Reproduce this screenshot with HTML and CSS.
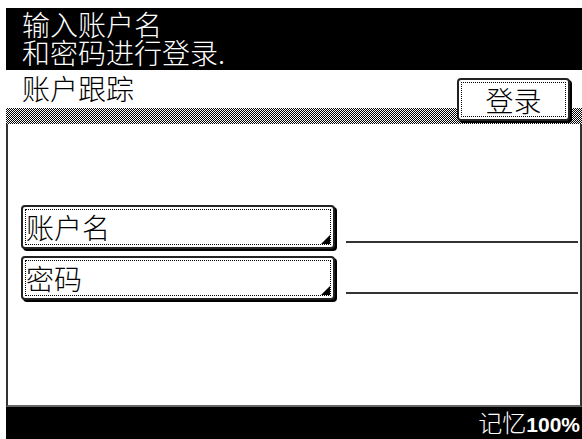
FILE: index.html
```html
<!DOCTYPE html>
<html lang="zh-CN">
<head>
  <meta charset="UTF-8" />
  <title>账户跟踪</title>
  <link rel="stylesheet" href="styles.css">
</head>
<body>

  <div class="screen">
    <header class="prompt">
      <div>输入账户名</div>
      <div>和密码进行登录.</div>
    </header>

    <div class="titlebar">
      <span class="title">账户跟踪</span>
      <button class="btn btn-login">登录</button>
    </div>

    <main class="panel">
      <div class="field">
        <button class="btn btn-field">账户名</button>
        <span class="line"></span>
      </div>
      <div class="field">
        <button class="btn btn-field">密码</button>
        <span class="line"></span>
      </div>
    </main>

    <footer class="status">记忆<b>100%</b></footer>
  </div>

</body>
</html>
```

FILE: styles.css
```css
body {
  margin: 0;
  background: #fff;
  font-family: "Noto Sans CJK SC", "DejaVu Sans", sans-serif;
  color: #000;
}

.screen {
  margin: 8px 0 0 6px;
  width: 576px;
  height: 431px;
  display: flex;
  flex-direction: column;
}

/* top message */
.prompt {
  height: 62px;
  box-sizing: border-box;
  background: #000;
  color: #fff;
  padding: 2px 0 0 16px;
  font-size: 28px;
  line-height: 28px;
  font-weight: 300;
}

/* title row with the dithered band underneath */
.titlebar {
  height: 54px;
  box-sizing: border-box;
  display: flex;
  justify-content: space-between;
  align-items: flex-start;
  padding: 0 12px 0 16px;
  background:
    linear-gradient(#fff, #fff) top / 100% 38px no-repeat,
    repeating-conic-gradient(#000 0 25%, #fff 0 50%) 0 0 / 2px 2px;
}

.title {
  font-size: 28px;
  line-height: 36px;
  font-weight: 300;
}

.btn {
  position: relative;
  font-family: inherit;
  font-weight: 300;
  font-size: 28px;
  color: #000;
  background: #fff;
  border: 2px solid #222;
  border-radius: 4px;
  box-shadow: 2px 2px 0 #000;
  outline: 1px dotted #000;
  outline-offset: -5px;
  padding: 0;
  cursor: pointer;
}

.btn-login {
  margin-top: 8px;
  width: 113px;
  height: 43px;
  line-height: 36px;
}

.panel {
  flex: 1;
  border-left: 2px solid #333;
  border-right: 2px solid #333;
  border-bottom: 2px solid #666;
  padding: 81px 0 0 13px;
  display: flex;
  flex-direction: column;
  gap: 7px;
}

.field {
  display: flex;
  align-items: flex-end;
  gap: 11px;
}

.btn-field {
  width: 314px;
  height: 44px;
  text-align: left;
  padding-left: 3px;
  line-height: 38px;
}

/* small corner mark on field buttons */
.btn-field::after {
  content: "";
  position: absolute;
  right: 3px;
  bottom: 3px;
  border-style: solid;
  border-width: 0 0 9px 9px;
  border-color: transparent transparent #000 transparent;
}

.line {
  flex: 1;
  height: 2px;
  background: #333;
  margin: 0 2px 6px 0;
}

.status {
  height: 32px;
  background: #000;
  color: #fff;
  text-align: right;
  padding-right: 2px;
  font-size: 24px;
  line-height: 29px;
  font-weight: 300;
  white-space: nowrap;
}

.status b {
  font-family: "Liberation Sans", Arial, sans-serif;
  font-size: 21px;
  font-weight: bold;
}
```
